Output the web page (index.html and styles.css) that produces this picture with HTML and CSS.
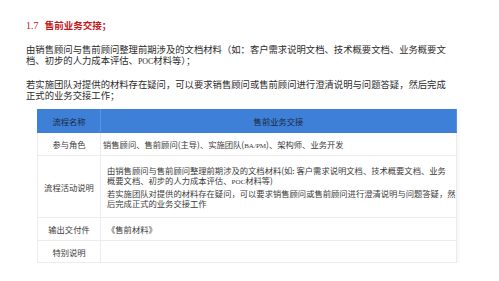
FILE: index.html
```html
<!DOCTYPE html>
<html lang="zh-CN">
<head>
<meta charset="utf-8">
<link rel="stylesheet" href="styles.css">
</head>
<body>
<div class="page">
  <h1 class="title"><span class="num">1.7</span> <span class="title-text">售前业务交接；</span></h1>
  <p class="para">由销售顾问与售前顾问整理前期涉及的文档材料（如：客户需求说明文档、技术概要文档、业务概要文<br>档、初步的人力成本评估、<span class="lat">POC</span>材料等）；</p>
  <p class="para para2">若实施团队对提供的材料存在疑问，可以要求销售顾问或售前顾问进行澄清说明与问题答疑，然后完成<br>正式的业务交接工作；</p>
  <table class="flow">
    <tr class="head">
      <th class="c1">流程名称</th>
      <th class="c2">售前业务交接</th>
    </tr>
    <tr class="r-short">
      <td class="c1">参与角色</td>
      <td class="c2 tight">销售顾问、售前顾问(主导)、实施团队(<span class="lat">BA/PM</span>)、架构师、业务开发</td>
    </tr>
    <tr class="r-tall">
      <td class="c1">流程活动说明</td>
      <td class="c2 multi">由销售顾问与售前顾问整理前期涉及的文档材料(如: 客户需求说明文档、技术概要文档、业务<br>概要文档、初步的人力成本评估、<span class="lat">POC</span>材料等)<br>若实施团队对提供的材料存在疑问，可以要求销售顾问或售前顾问进行澄清说明与问题答疑，然<br>后完成正式的业务交接工作</td>
    </tr>
    <tr class="r-short">
      <td class="c1">输出交付件</td>
      <td class="c2">《售前材料》</td>
    </tr>
    <tr class="r-last">
      <td class="c1">特别说明</td>
      <td class="c2"></td>
    </tr>
  </table>
</div>
</body>
</html>
```

FILE: styles.css
```css
html, body {
  margin: 0;
  padding: 0;
  background: #ffffff;
}

body {
  font-family: "Noto Sans CJK SC", "Noto Sans", sans-serif;
  color: #2a2a2a;
}

.page {
  padding: 19px 0 0 26px;
}

.title {
  margin: 0;
  font-size: 9.5px;
  line-height: 12px;
  font-weight: normal;
  color: #c8161d;
}

.title .num {
  font-family: "Liberation Serif", serif;
  font-size: 10px;
}

.title .title-text {
  font-weight: bold;
  padding-left: 4px;
}

.lat {
  font-family: "Liberation Serif", serif;
  font-size: 0.85em;
}

.para {
  margin: 11.5px 0 0 0;
  font-size: 9.33px;
  line-height: 11px;
  white-space: nowrap;
  color: #2b2b2b;
}

.para2 {
  margin-top: 12px;
}

.flow {
  margin: 8.5px 0 0 11px;
  width: 420px;
  border-collapse: collapse;
  font-size: 8.3px;
  color: #3a3a3a;
  box-shadow: 2px 0 3px rgba(0, 0, 0, 0.04);
}

.flow th,
.flow td {
  border: 1px solid #ececec;
  padding: 0;
  vertical-align: middle;
}

.flow .c1 {
  width: 62px;
  text-align: center;
}

.flow .c2 {
  text-align: left;
  padding-left: 6px;
  white-space: nowrap;
}

.flow .c2.tight {
  padding-left: 2px;
}

.head th {
  background: #3e7fd8;
  border-color: #3e7fd8;
  border-right-color: #5c93df;
  height: 22px;
  font-weight: normal;
  color: #1d2a40;
}

.head .c2 {
  text-align: center;
  padding-left: 0;
}

.r-short td {
  height: 22px;
}

.r-last td {
  height: 21px;
}

.r-tall td {
  height: 61px;
}

.multi {
  line-height: 10.4px;
}
```
